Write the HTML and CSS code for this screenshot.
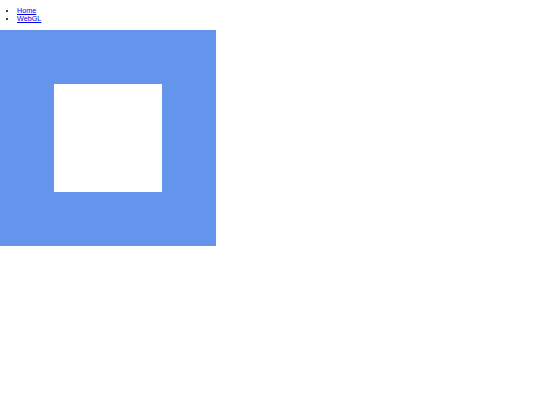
FILE: index.html
```html
<!DOCTYPE html>
<html>
<head>
<meta charset="utf-8">
<link rel="stylesheet" href="styles.css">
</head>
<body>
<ul class="nav">
  <li><a href="#">Home</a></li>
  <li><a href="#">WebGL</a></li>
</ul>
<div class="stage"><div class="square"></div></div>
</body>
</html>
```
FILE: styles.css
```css
body {
  margin: 0;
  font-family: "Liberation Sans", Arial, sans-serif;
  background: #fff;
}
.nav {
  margin: 6.6px 0 6.7px;
  padding-left: 17px;
  font-size: 7.2px;
  line-height: 8.3px;
}
.nav a {
  color: #0000ee;
}
.stage {
  width: 216px;
  height: 216px;
  box-sizing: border-box;
  padding: 54px;
  background: #6495ed;
}
.square {
  width: 108px;
  height: 108px;
  background: #fff;
}
```
